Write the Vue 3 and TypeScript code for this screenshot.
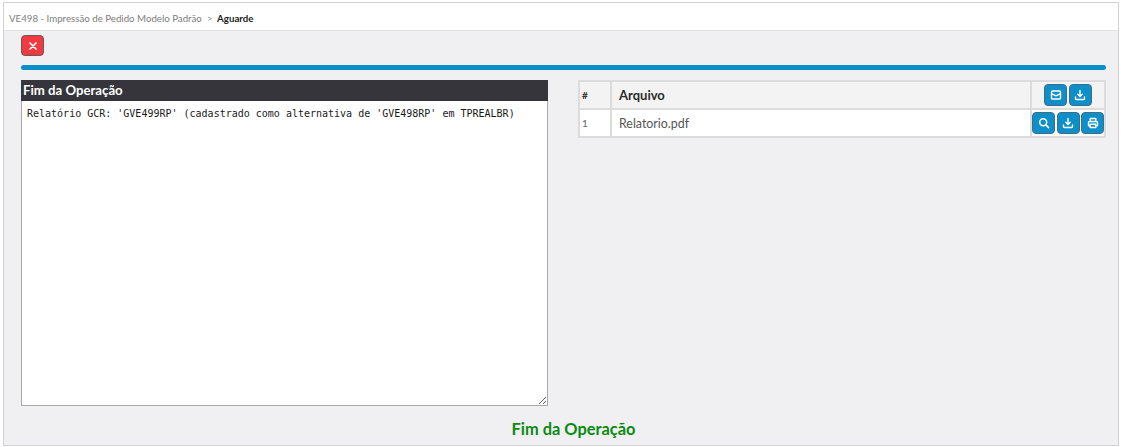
<script setup lang="ts">
const log = "Relatório GCR: 'GVE499RP' (cadastrado como alternativa de 'GVE498RP' em TPREALBR)";
</script>

<template>
  <div class="page">
    <div class="panel">
      <div class="crumbs">
        <span class="crumb">VE498 - Impressão de Pedido Modelo Padrão</span>
        <span class="sep">&gt;</span>
        <strong class="current">Aguarde</strong>
      </div>
      <div class="body">
        <button class="btn danger" type="button" aria-label="Fechar">
          <svg width="10" height="10" viewBox="0 0 10 10"><path d="M2 2l6 6M8 2l-6 6" stroke="#fff" stroke-width="1.7" stroke-linecap="round" fill="none" /></svg>
        </button>
        <div class="progress"></div>
        <div class="columns">
          <section class="output">
            <h2 class="output-title">Fim da Operação</h2>
            <textarea class="log" readonly :value="log"></textarea>
          </section>
          <table class="files">
            <thead>
              <tr>
                <th class="c-num">#</th>
                <th class="c-name">Arquivo</th>
                <th class="c-act">
                  <div class="acts">
                    <button class="btn info" type="button" aria-label="Enviar por e-mail">
                      <svg width="12" height="12" viewBox="0 0 12 12" fill="none" stroke="#fff" stroke-width="1.4" stroke-linejoin="round"><rect x="1.5" y="2" width="9" height="8" rx="1.2" /><path d="M1.5 4.6L6 6.8l4.5-2.2" /></svg>
                    </button>
                    <button class="btn info" type="button" aria-label="Baixar todos">
                      <svg width="12" height="12" viewBox="0 0 12 12" fill="none" stroke="#fff" stroke-width="1.4" stroke-linecap="round" stroke-linejoin="round"><path d="M6 1.5v6M3.8 5.3L6 7.5l2.2-2.2M1.5 8v1.5a1 1 0 0 0 1 1h7a1 1 0 0 0 1-1V8" /></svg>
                    </button>
                  </div>
                </th>
              </tr>
            </thead>
            <tbody>
              <tr>
                <td class="c-num num">1</td>
                <td class="c-name name">Relatorio.pdf</td>
                <td class="c-act">
                  <div class="acts">
                    <button class="btn info" type="button" aria-label="Visualizar">
                      <svg width="12" height="12" viewBox="0 0 12 12" fill="none" stroke="#fff" stroke-width="1.5" stroke-linecap="round"><circle cx="5.2" cy="5.2" r="3.5" /><path d="M7.9 7.9l2.7 2.7" /></svg>
                    </button>
                    <button class="btn info" type="button" aria-label="Baixar">
                      <svg width="12" height="12" viewBox="0 0 12 12" fill="none" stroke="#fff" stroke-width="1.4" stroke-linecap="round" stroke-linejoin="round"><path d="M6 1.5v6M3.8 5.3L6 7.5l2.2-2.2M1.5 8v1.5a1 1 0 0 0 1 1h7a1 1 0 0 0 1-1V8" /></svg>
                    </button>
                    <button class="btn info" type="button" aria-label="Imprimir">
                      <svg width="12" height="12" viewBox="0 0 12 12" fill="none" stroke="#fff" stroke-width="1.4" stroke-linejoin="round"><path d="M3.2 4.5V1.5h5.6v3M3.2 8.8H1.5V5.6a1.1 1.1 0 0 1 1.1-1.1h6.8a1.1 1.1 0 0 1 1.1 1.1v3.2H8.8" /><rect x="3.2" y="7.2" width="5.6" height="3.3" /></svg>
                    </button>
                  </div>
                </td>
              </tr>
            </tbody>
          </table>
        </div>
        <p class="status">Fim da Operação</p>
      </div>
    </div>
  </div>
</template>

<style>
html, body { margin: 0; background: #fff; }
</style>

<style scoped>
.page {
  width: 1121px;
  height: 447px;
  box-sizing: border-box;
  padding: 2px 2px 1px 3px;
  font-family: Lato, "Open Sans", sans-serif;
}
.panel {
  height: 100%;
  box-sizing: border-box;
  border: 1px solid #d2d2d2;
  background: #f0f0f2;
  display: flex;
  flex-direction: column;
}
.crumbs {
  height: 28px;
  flex: none;
  background: #fff;
  border-bottom: 1px solid #e2e2e2;
  box-sizing: border-box;
  padding: 3px 0 0 5px;
  display: flex;
  align-items: center;
  gap: 5px;
  font-size: 9.7px;
}
.crumb { color: #7d7d7d; }
.sep { color: #8a8a8a; font-size: 9px; }
.current { color: #1c1c1c; font-weight: 700; }
.body {
  flex: 1;
  min-height: 0;
  padding: 4px 12px 0 17px;
  display: flex;
  flex-direction: column;
}
.btn {
  padding: 0;
  margin: 0;
  display: flex;
  align-items: center;
  justify-content: center;
  border: 1px solid #4a5560;
  border-radius: 4px;
  box-sizing: border-box;
}
.danger {
  width: 23px;
  height: 21px;
  background: #ef3b3f;
  border-color: #70585a;
}
.info {
  width: 23px;
  height: 22px;
  background: #0f8fc9;
  border-color: #3f6c86;
}
.progress {
  height: 5px;
  margin-top: 9px;
  border-radius: 3px;
  background: #0b8fca;
  flex: none;
}
.columns {
  margin-top: 10px;
  display: flex;
  gap: 30px;
  align-items: flex-start;
}
.output {
  width: 527px;
  flex: none;
  display: flex;
  flex-direction: column;
}
.output-title {
  margin: 0;
  height: 21px;
  background: #35353b;
  color: #fff;
  font-size: 13.2px;
  font-weight: 700;
  line-height: 21px;
  padding-left: 2px;
}
.log {
  display: block;
  width: 100%;
  height: 305px;
  box-sizing: border-box;
  margin: 0;
  border: 1px solid #a8a8a8;
  border-top: 0;
  background: #fff;
  padding: 6px 5px;
  font-family: "DejaVu Sans Mono", monospace;
  font-size: 10px;
  line-height: 14px;
  color: #1a1a1a;
  outline: none;
}
.files {
  flex: 1;
  border-collapse: collapse;
  table-layout: fixed;
  background: #fff;
}
.files th, .files td {
  border: 2px solid #dcdcdc;
  padding: 0;
  box-sizing: border-box;
}
.files th { background: #f3f3f3; height: 28px; }
.files td { height: 28px; }
.c-num { width: 32px; text-align: left; }
.c-act { width: 74px; }
.files th.c-num { font-size: 10px; padding-left: 2px; color: #333; font-weight: 700; }
.files th.c-name { text-align: left; padding-left: 7px; font-size: 13px; color: #2b2b2b; font-weight: 700; }
.num { font-size: 10px; color: #666; padding-left: 2px !important; }
.name { font-size: 12.4px; color: #555; padding-left: 7px !important; }
.acts { display: flex; justify-content: center; gap: 1.5px; }
.status {
  margin: 13px 0 0;
  padding-left: 20px;
  text-align: center;
  color: #0b8a12;
  font-size: 16.4px;
  font-weight: 700;
  line-height: 20px;
}
</style>
